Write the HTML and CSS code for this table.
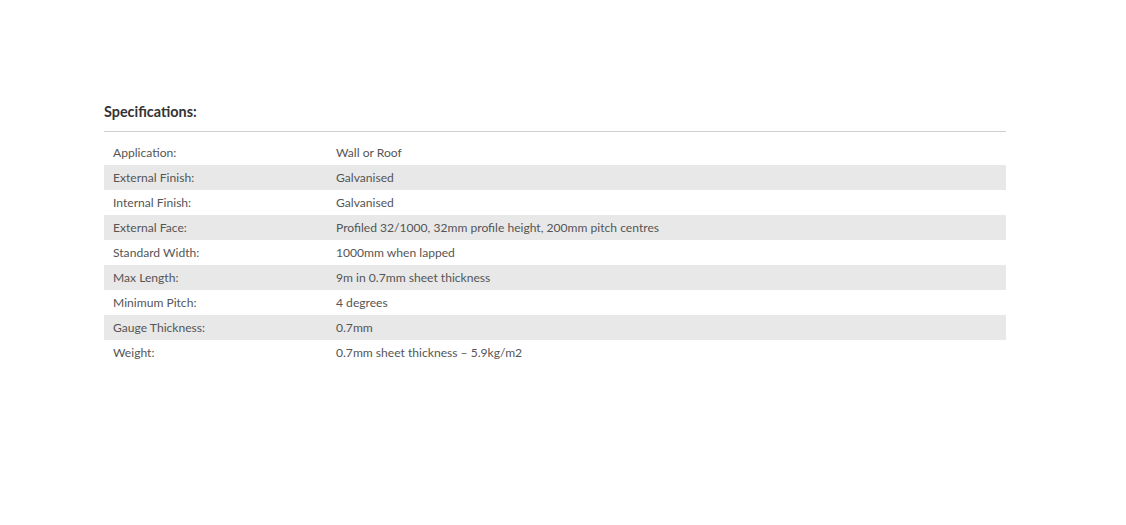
FILE: index.html
```html
<!DOCTYPE html>
<html>
<head>
<meta charset="utf-8">
<link rel="stylesheet" href="styles.css">
</head>
<body>
<section class="specs">
  <h2 class="specs-title">Specifications:</h2>
  <table class="specs-table">
    <tr><td class="label">Application:</td><td>Wall or Roof</td></tr>
    <tr><td class="label">External Finish:</td><td>Galvanised</td></tr>
    <tr><td class="label">Internal Finish:</td><td>Galvanised</td></tr>
    <tr><td class="label">External Face:</td><td>Profiled 32/1000, 32mm profile height, 200mm pitch centres</td></tr>
    <tr><td class="label">Standard Width:</td><td>1000mm when lapped</td></tr>
    <tr><td class="label">Max Length:</td><td>9m in 0.7mm sheet thickness</td></tr>
    <tr><td class="label">Minimum Pitch:</td><td>4 degrees</td></tr>
    <tr><td class="label">Gauge Thickness:</td><td>0.7mm</td></tr>
    <tr><td class="label">Weight:</td><td>0.7mm sheet thickness – 5.9kg/m2</td></tr>
  </table>
</section>
</body>
</html>
```
FILE: styles.css
```css
html, body {
  margin: 0;
  padding: 0;
  background: #ffffff;
}
body {
  font-family: "Lato", "Noto Sans", sans-serif;
  color: #555555;
}
.specs {
  width: 902px;
  margin-left: 104px;
  padding-top: 102px;
}
.specs-title {
  margin: 0;
  font-size: 14.4px;
  font-weight: 700;
  line-height: 20px;
  color: #333333;
  padding-bottom: 9px;
  border-bottom: 1px solid #cfcfcf;
}
.specs-table {
  margin-top: 8px;
  width: 100%;
  border-collapse: collapse;
  font-size: 12.1px;
}
.specs-table td {
  height: 25px;
  padding: 0 0 0 9px;
  vertical-align: middle;
}
.specs-table td.label {
  width: 223px;
}
.specs-table td + td {
  padding-left: 0;
}
.specs-table tr:nth-child(even) td {
  background: #e8e8e8;
}
```
